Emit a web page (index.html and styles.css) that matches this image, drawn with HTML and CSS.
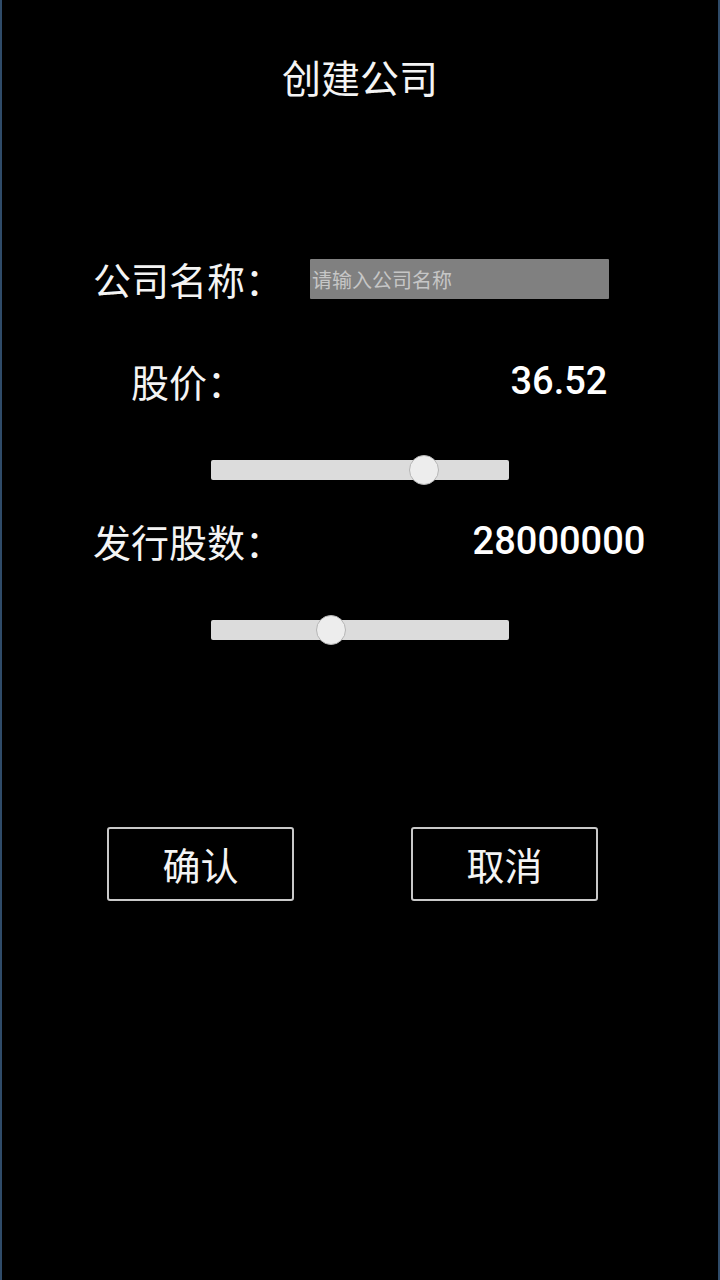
FILE: index.html
```html
<!DOCTYPE html>
<html lang="zh-CN">
<head>
<meta charset="utf-8">
<title>创建公司</title>
<link rel="stylesheet" href="styles.css">
</head>
<body>
<div class="screen">
  <h1 class="title">创建公司</h1>

  <div class="row row-name">
    <label class="label" for="company">公司名称：</label>
    <input id="company" class="name-input" type="text" placeholder="请输入公司名称">
  </div>

  <div class="row row-price">
    <span class="label">股价：</span>
    <span class="value">36.52</span>
  </div>
  <div class="slider slider-price">
    <div class="track"></div>
    <div class="thumb" style="left: 71.5%"></div>
  </div>

  <div class="row row-shares">
    <span class="label">发行股数：</span>
    <span class="value">28000000</span>
  </div>
  <div class="slider slider-shares">
    <div class="track"></div>
    <div class="thumb" style="left: 40.2%"></div>
  </div>

  <div class="actions">
    <button class="btn" type="button">确认</button>
    <button class="btn" type="button">取消</button>
  </div>
</div>
</body>
</html>
```

FILE: styles.css
```css
html, body {
  margin: 0;
  padding: 0;
  background: #000;
}

.screen {
  box-sizing: border-box;
  width: 720px;
  height: 1280px;
  background: #000;
  border-left: 2px solid #2f4b69;
  border-right: 2px solid #2f4b69;
  color: #f4f4f4;
  font-family: "Noto Sans CJK SC", "Noto Sans", sans-serif;
  display: flex;
  flex-direction: column;
  overflow: hidden;
}

.title {
  margin: 57px 0 0 0;
  height: 38px;
  line-height: 38px;
  font-size: 39px;
  font-weight: normal;
  text-align: center;
}

.row {
  display: flex;
  align-items: center;
  height: 40px;
  padding-left: 91px;
}

.row-name { margin-top: 164px; }
.row-price { margin-top: 62px; }
.row-shares { margin-top: 36px; }

.label {
  width: 190px;
  flex: none;
  text-align: center;
  font-size: 38px;
  line-height: 40px;
  white-space: nowrap;
}

.name-input {
  box-sizing: border-box;
  margin: 0 0 0 27px;
  width: 299px;
  height: 40px;
  padding: 0 0 0 2px;
  border: none;
  border-radius: 1px;
  outline: none;
  background: #808080;
  color: #e0e0e0;
  font-family: "Noto Sans CJK SC", "Noto Sans", sans-serif;
  font-size: 20px;
}

.name-input::placeholder {
  color: #c6c6c6;
  opacity: 1;
}

.value {
  width: 298px;
  flex: none;
  margin-left: 127px;
  text-align: center;
  font-family: Roboto, "Liberation Sans", sans-serif;
  font-weight: 500;
  font-size: 38px;
  line-height: 40px;
  color: #fff;
}

.slider {
  position: relative;
  align-self: flex-start;
  margin-left: 209px;
  width: 298px;
  height: 30px;
  display: flex;
  align-items: center;
}

.slider-price { margin-top: 54px; }
.slider-shares { margin-top: 54px; }

.track {
  width: 100%;
  height: 20px;
  background: #dcdcdc;
  border-radius: 2px;
}

.thumb {
  position: absolute;
  top: 0;
  width: 28px;
  height: 28px;
  border-radius: 50%;
  background: #ededed;
  border: 1px solid #b5b5b5;
  transform: translateX(-50%);
}

.actions {
  display: flex;
  gap: 117px;
  margin-top: 182px;
  padding-left: 105px;
}

.btn {
  box-sizing: border-box;
  width: 187px;
  height: 74px;
  margin: 0;
  padding: 0;
  background: #000;
  border: 2px solid #c9c9c9;
  border-radius: 3px;
  color: #f4f4f4;
  font-family: "Noto Sans CJK SC", "Noto Sans", sans-serif;
  font-size: 38px;
  line-height: 70px;
  text-align: center;
}
```
